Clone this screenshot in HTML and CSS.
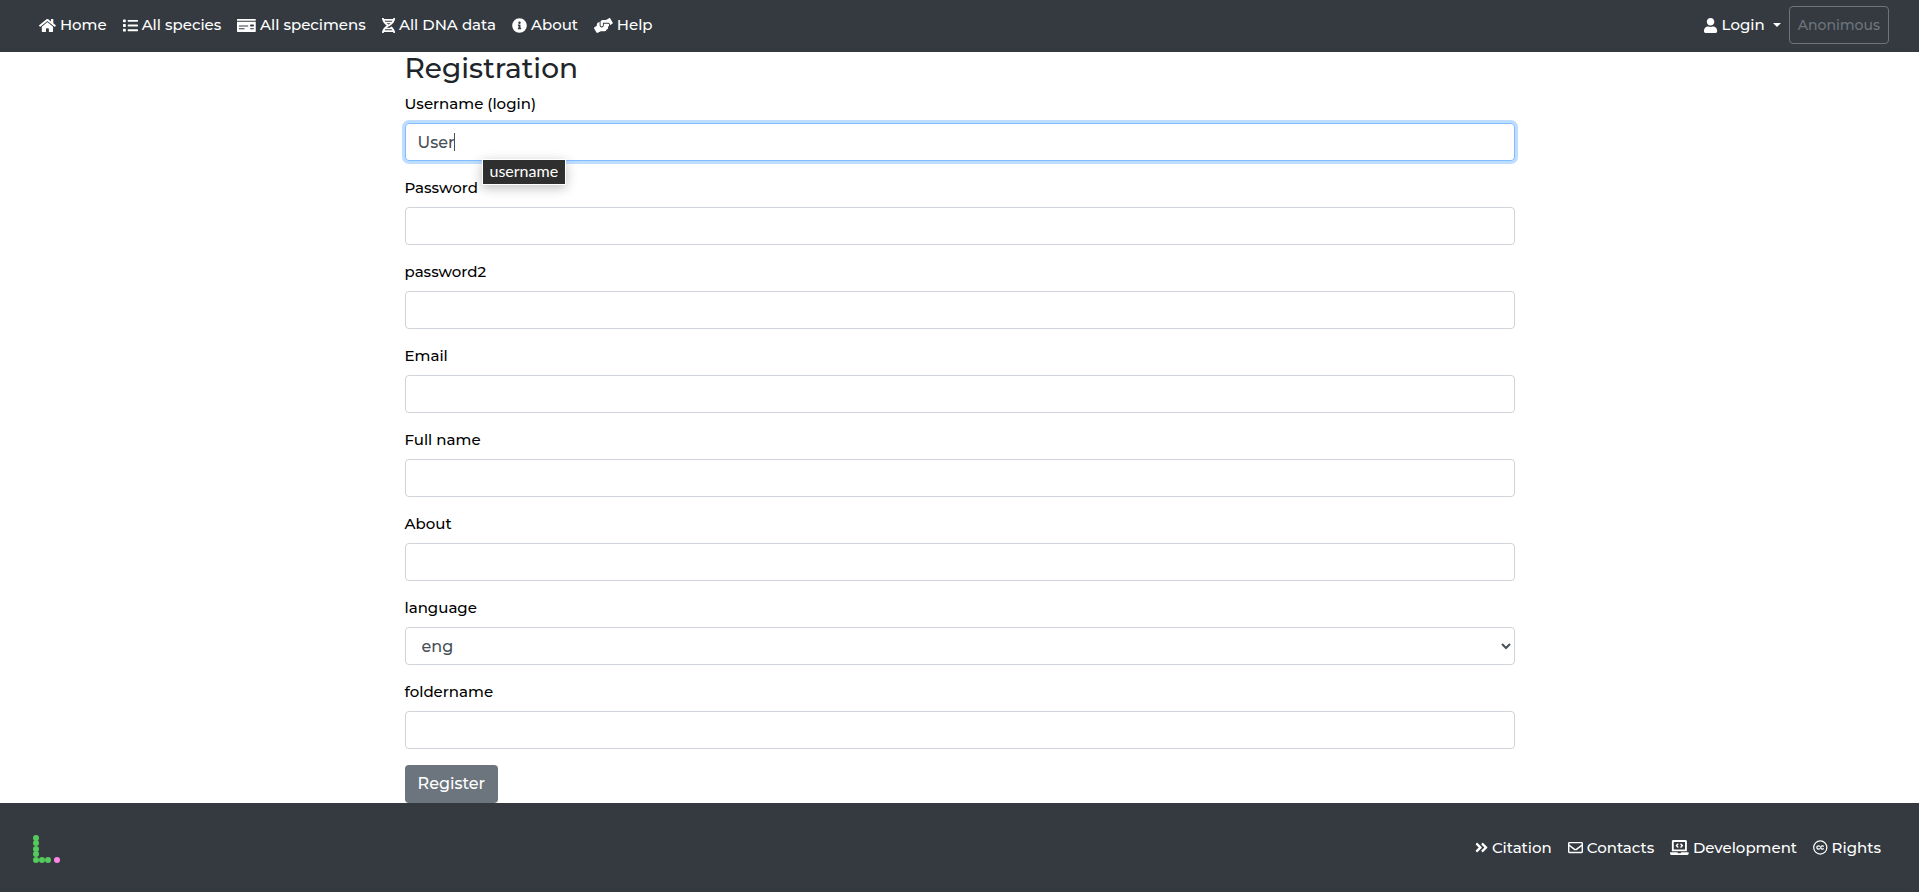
FILE: index.html
```
<!DOCTYPE html>
<html lang="en">
<head>
    <meta charset="UTF-8">
    <meta name="viewport" content="width=device-width, initial-scale=1">
    <title>Registration</title>
    <link rel="stylesheet" href="styles.css">
</head>
<body>
<nav class="navbar">
    <ul class="nav-list">
        <li><a class="nav-link" href="#"><svg class="icon" viewBox="0 0 576 512"><path d="M280.37 148.26L96 300.11V464a16 16 0 0 0 16 16l112.06-.29a16 16 0 0 0 15.92-16V368a16 16 0 0 1 16-16h64a16 16 0 0 1 16 16v95.64a16 16 0 0 0 16 16.05L464 480a16 16 0 0 0 16-16V300L295.67 148.26a12.19 12.19 0 0 0-15.3 0zM571.6 251.47L488 182.56V44.05a12 12 0 0 0-12-12h-56a12 12 0 0 0-12 12v72.61L318.47 43a48 48 0 0 0-61 0L4.34 251.47a12 12 0 0 0-1.6 16.9l25.5 31A12 12 0 0 0 45.15 301l235.22-193.74a12.19 12.19 0 0 1 15.3 0L530.9 301a12 12 0 0 0 16.9-1.6l25.5-31a12 12 0 0 0-1.7-16.93z"/></svg>Home</a></li>
        <li><a class="nav-link" href="#"><svg class="icon" viewBox="0 0 512 512"><path d="M80 368H16a16 16 0 0 0-16 16v64a16 16 0 0 0 16 16h64a16 16 0 0 0 16-16v-64a16 16 0 0 0-16-16zm0-320H16A16 16 0 0 0 0 64v64a16 16 0 0 0 16 16h64a16 16 0 0 0 16-16V64a16 16 0 0 0-16-16zm0 160H16a16 16 0 0 0-16 16v64a16 16 0 0 0 16 16h64a16 16 0 0 0 16-16v-64a16 16 0 0 0-16-16zm416 176H176a16 16 0 0 0-16 16v32a16 16 0 0 0 16 16h320a16 16 0 0 0 16-16v-32a16 16 0 0 0-16-16zm0-320H176a16 16 0 0 0-16 16v32a16 16 0 0 0 16 16h320a16 16 0 0 0 16-16V80a16 16 0 0 0-16-16zm0 160H176a16 16 0 0 0-16 16v32a16 16 0 0 0 16 16h320a16 16 0 0 0 16-16v-32a16 16 0 0 0-16-16z"/></svg>All species</a></li>
        <li><a class="nav-link" href="#"><svg class="icon" viewBox="0 0 640 512"><path d="M0 448c0 17.67 14.33 32 32 32h576c17.67 0 32-14.33 32-32V128H0v320zm448-208c0-8.84 7.16-16 16-16h96c8.84 0 16 7.16 16 16v32c0 8.84-7.16 16-16 16h-96c-8.84 0-16-7.16-16-16v-32zm0 120c0-4.42 3.58-8 8-8h112c4.42 0 8 3.58 8 8v16c0 4.42-3.58 8-8 8H456c-4.42 0-8-3.58-8-8v-16zM64 264c0-4.42 3.58-8 8-8h304c4.42 0 8 3.58 8 8v16c0 4.42-3.58 8-8 8H72c-4.42 0-8-3.58-8-8v-16zm0 96c0-4.42 3.58-8 8-8h176c4.42 0 8 3.58 8 8v16c0 4.42-3.58 8-8 8H72c-4.42 0-8-3.58-8-8v-16zM624 32H16C7.16 32 0 39.16 0 48v48h640V48c0-8.84-7.16-16-16-16z"/></svg>All specimens</a></li>
        <li><a class="nav-link" href="#"><svg class="icon" viewBox="0 0 448 512"><path d="M.1 494.1c-1.1 9.5 6.3 17.8 15.9 17.8l32.3.1c8.1 0 14.9-5.9 16-13.9.7-4.9 1.8-11.1 3.4-18.1H380c1.6 6.9 2.9 13.2 3.5 18.1 1.1 8 7.9 14 16 13.9l32.3-.1c9.6 0 17.1-8.3 15.9-17.8-4.6-37.9-25.6-129-118.9-207.7-17.6 12.4-37.1 24.2-58.5 35.4 6.2 4.6 11.4 9.4 17 14.2H159.7c21.3-18.1 47-35.6 78.7-51.4C410.5 199.1 442.1 65.8 447.9 17.9 449 8.4 441.6.1 432 .1L399.6 0c-8.1 0-14.9 5.9-16 13.9-.7 4.9-1.8 11.1-3.4 18.1H67.8c-1.6-7-2.7-13.1-3.4-18.1-1.1-8-7.9-14-16-13.9L16.1.1C6.5.1-1 8.4.1 17.9 5.3 60.8 31.4 171.8 160 256 31.5 340.2 5.3 451.2.1 494.1zM224 219.6c-25.1-13.7-46.4-28.4-64.3-43.6h128.5c-17.8 15.2-39.1 30-64.2 43.6zM355.1 96c-5.8 10.4-12.8 21.1-21 32H114c-8.3-10.9-15.3-21.6-21-32h262.1zM92.9 416c5.8-10.4 12.8-21.1 21-32h219.4c8.3 10.9 15.4 21.6 21.2 32H92.9z"/></svg>All DNA data</a></li>
        <li><a class="nav-link" href="#"><svg class="icon" viewBox="0 0 512 512"><path d="M256 8C119.043 8 8 119.083 8 256c0 136.997 111.043 248 248 248s248-111.003 248-248C504 119.083 392.957 8 256 8zm0 110c23.196 0 42 18.804 42 42s-18.804 42-42 42-42-18.804-42-42 18.804-42 42-42zm56 254c0 6.627-5.373 12-12 12h-88c-6.627 0-12-5.373-12-12v-24c0-6.627 5.373-12 12-12h12v-64h-12c-6.627 0-12-5.373-12-12v-24c0-6.627 5.373-12 12-12h64c6.627 0 12 5.373 12 12v100h12c6.627 0 12 5.373 12 12v24z"/></svg>About</a></li>
        <li><a class="nav-link" href="#"><svg class="icon" viewBox="0 0 640 512"><path d="M488 192H336v56c0 39.7-32.3 72-72 72s-72-32.3-72-72V126.4l-64.9 39C107.8 176.9 96 197.8 96 220.2v47.3l-80 46.2C.7 322.5-4.6 342.1 4.3 357.4l80 138.6c8.8 15.3 28.4 20.5 43.7 11.7L231.4 448H368c35.3 0 64-28.7 64-64h16c17.7 0 32-14.3 32-32v-64h8c13.3 0 24-10.7 24-24v-48c0-13.3-10.7-24-24-24zm147.7-37.4L555.7 16C546.9.7 527.3-4.5 512 4.3L408.6 64H306.4c-12 0-23.7 3.4-33.9 9.7L239 94.6c-9.4 5.8-15 16.1-15 27.1V248c0 22.1 17.9 40 40 40s40-17.9 40-40v-88h184c30.9 0 56 25.1 56 56v28.5l80-46.2c15.3-8.9 20.5-28.4 11.7-43.7z"/></svg>Help</a></li>
    </ul>
    <div class="nav-user">
        <a class="nav-link dropdown" href="#"><svg class="icon" viewBox="0 0 448 512"><path d="M224 256c70.7 0 128-57.3 128-128S294.7 0 224 0 96 57.3 96 128s57.3 128 128 128zm89.6 32h-16.7c-22.2 10.2-46.9 16-72.9 16s-50.6-5.8-72.9-16h-16.7C60.2 288 0 348.2 0 422.4V464c0 26.5 21.5 48 48 48h352c26.5 0 48-21.5 48-48v-41.6c0-74.2-60.2-134.4-134.4-134.4z"/></svg>Login</a>
        <button class="btn btn-outline" type="button" disabled>Anonimous</button>
    </div>
</nav>
<main class="container">
    <h2>Registration</h2>
    <form>
        <div class="form-group">
            <label for="username">Username (login)</label>
            <input class="form-control active" type="text" id="username" value="User" autofocus>
            <span class="cursor"></span>
            <span class="tip">username</span>
        </div>
        <div class="form-group">
            <label for="password">Password</label>
            <input class="form-control" type="password" id="password">
        </div>
        <div class="form-group">
            <label for="password2">password2</label>
            <input class="form-control" type="password" id="password2">
        </div>
        <div class="form-group">
            <label for="email">Email</label>
            <input class="form-control" type="email" id="email">
        </div>
        <div class="form-group">
            <label for="fullname">Full name</label>
            <input class="form-control" type="text" id="fullname">
        </div>
        <div class="form-group">
            <label for="about">About</label>
            <input class="form-control" type="text" id="about">
        </div>
        <div class="form-group">
            <label for="language">language</label>
            <select class="form-control" id="language">
                <option>eng</option>
            </select>
        </div>
        <div class="form-group">
            <label for="foldername">foldername</label>
            <input class="form-control" type="text" id="foldername">
        </div>
        <button class="btn btn-secondary" type="submit">Register</button>
    </form>
</main>
<footer class="footer">
    <a class="logo" href="#" aria-label="Home">
        <svg width="32" height="32" viewBox="0 0 32 32">
            <g fill="#54c95c">
                <circle cx="6" cy="6" r="3"/>
                <circle cx="6" cy="11" r="3"/>
                <circle cx="6" cy="17" r="3"/>
                <circle cx="6" cy="22" r="3"/>
                <circle cx="6" cy="28" r="3"/>
                <circle cx="12" cy="28" r="3"/>
                <circle cx="18" cy="28" r="3"/>
            </g>
            <circle cx="27" cy="28" r="3" fill="#ff85e4"/>
        </svg>
    </a>
    <ul class="nav-list">
        <li><a class="nav-link" href="#"><svg class="icon" viewBox="0 0 448 512"><path d="M224.3 273l-136 136c-9.4 9.4-24.6 9.4-33.9 0l-22.6-22.6c-9.4-9.4-9.4-24.6 0-33.9l96.4-96.4-96.4-96.4c-9.4-9.4-9.4-24.6 0-33.9L54.3 103c9.4-9.4 24.6-9.4 33.9 0l136 136c9.5 9.4 9.5 24.6.1 34zm192-34l-136-136c-9.4-9.4-24.6-9.4-33.9 0l-22.6 22.6c-9.4 9.4-9.4 24.6 0 33.9l96.4 96.4-96.4 96.4c-9.4 9.4-9.4 24.6 0 33.9l22.6 22.6c9.4 9.4 24.6 9.4 33.9 0l136-136c9.4-9.2 9.4-24.4 0-33.8z"/></svg>Citation</a></li>
        <li><a class="nav-link" href="#"><svg class="icon" viewBox="0 0 512 512"><path d="M464 64H48C21.49 64 0 85.49 0 112v288c0 26.51 21.49 48 48 48h416c26.51 0 48-21.49 48-48V112c0-26.51-21.49-48-48-48zm0 48v40.805c-22.422 18.259-58.168 46.651-134.587 106.49-16.841 13.247-50.201 45.072-73.413 44.701-23.208.375-56.579-31.459-73.413-44.701C106.18 199.465 70.425 171.067 48 152.805V112h416zM48 400V214.398c22.914 18.251 55.409 43.862 104.938 82.646 21.857 17.205 60.134 55.186 103.062 54.955 42.717.231 80.509-37.199 103.053-54.947 49.528-38.783 82.032-64.401 104.947-82.653V400H48z"/></svg>Contacts</a></li>
        <li><a class="nav-link" href="#"><svg class="icon" viewBox="0 0 640 512"><path d="M255.03 261.65c6.25 6.25 16.38 6.25 22.63 0l11.31-11.31c6.25-6.25 6.25-16.38 0-22.63L253.25 192l35.71-35.72c6.25-6.25 6.25-16.38 0-22.63l-11.31-11.31c-6.25-6.25-16.38-6.25-22.63 0l-58.34 58.34c-6.25 6.25-6.25 16.38 0 22.63l58.35 58.34zm96.01-11.3l11.31 11.31c6.25 6.25 16.38 6.25 22.63 0l58.34-58.34c6.25-6.25 6.25-16.38 0-22.63l-58.34-58.34c-6.25-6.25-16.38-6.25-22.63 0l-11.31 11.31c-6.25 6.25-6.25 16.38 0 22.63L386.75 192l-35.71 35.72c-6.25 6.25-6.25 16.38 0 22.63zM624 416H381.54c-.74 19.81-14.71 32-32.74 32H288c-18.69 0-33.02-17.47-32.77-32H16c-8.8 0-16 7.2-16 16v16c0 35.2 28.8 64 64 64h512c35.2 0 64-28.8 64-64v-16c0-8.8-7.2-16-16-16zM576 48c0-26.4-21.6-48-48-48H112C85.6 0 64 21.6 64 48v336h512V48zm-64 272H128V64h384v256z"/></svg>Development</a></li>
        <li><a class="nav-link" href="#"><svg class="icon icon-line" viewBox="0 0 496 512"><circle cx="248" cy="256" r="225"/><path d="M231 224a55 55 0 1 0 0 64M364 224a55 55 0 1 0 0 64"/></svg>Rights</a></li>
    </ul>
</footer>
</body>
</html>
```

FILE: styles.css
```
*{
    box-sizing: border-box;
}
body{
    margin: 0;
    min-height: 100vh;
    display: flex;
    flex-direction: column;
    font-family: Montserrat, Inter, "Liberation Sans", sans-serif;
    font-size: 15px;
    font-weight: 500;
    line-height: 22px;
    color: #212529;
    background: #ffffff;
}
.navbar,.footer{
    display: flex;
    align-items: center;
    justify-content: space-between;
    background: #343a40;
}
.navbar{
    min-height: 52px;
    padding: 0 30px 2px 31px;
}
.nav-list{
    display: flex;
    flex-wrap: wrap;
    margin: 0;
    padding: 0;
    list-style: none;
}
.nav-link{
    display: flex;
    align-items: center;
    gap: 4px;
    padding: 8px;
    color: #ffffff;
    text-decoration: none;
}
.icon{
    height: 15px;
    fill: currentColor;
}
.icon-line{
    fill: none;
    stroke: currentColor;
    stroke-width: 42;
}
.nav-user{
    display: flex;
    align-items: center;
}
.dropdown::after{
    content: "";
    margin-left: 4px;
    border-top: 4px solid;
    border-left: 4px solid transparent;
    border-right: 4px solid transparent;
}
.btn{
    height: 38px;
    border: 1px solid transparent;
    border-radius: 4px;
    font: inherit;
}
.btn-outline{
    padding: 0 8px;
    font-size: 14px;
    border-color: #6c757d;
    color: #6c757d;
    background: transparent;
}
.btn-secondary{
    display: block;
    padding: 0 12px;
    font-size: 16px;
    color: #ffffff;
    background: #6c757d;
}
.container{
    width: 100%;
    max-width: 1140px;
    margin: 0 auto;
    padding: 0 15px;
}
h2{
    margin: 0 0 8px;
    font-size: 28px;
    font-weight: 500;
    line-height: 33px;
}
.form-group{
    position: relative;
    margin-bottom: 16px;
}
label{
    display: block;
    margin-bottom: 8px;
    color: #000000;
}
.form-control{
    display: block;
    width: 100%;
    height: 38px;
    padding: 6px 12px;
    border: 1px solid #ced4da;
    border-radius: 4px;
    font: inherit;
    font-size: 16px;
    color: #495057;
    background: #ffffff;
}
.form-control:focus,.form-control.active{
    border-color: #80bdff;
    outline: 0;
    box-shadow: 0 0 0 3px rgba(0,123,255,.25);
}
/* steady text cursor instead of the blinking one */
.active{
    caret-color: transparent;
}
.cursor{
    position: absolute;
    top: 40px;
    left: 49px;
    width: 1px;
    height: 18px;
    background: #495057;
}
/* hint under the field */
.tip{
    position: absolute;
    top: 66px;
    left: 77px;
    padding: 0 7px 3px;
    border: 1px solid #ffffff;
    font-family: Lato, sans-serif;
    font-size: 16px;
    font-weight: 400;
    line-height: 21px;
    color: #ffffff;
    background: #2f2f2f;
    box-shadow: 0 3px 12px rgba(0,0,0,.25);
}
.footer{
    flex: 1;
    min-height: 89px;
    padding: 0 30px;
}
.logo{
    display: flex;
}
```
